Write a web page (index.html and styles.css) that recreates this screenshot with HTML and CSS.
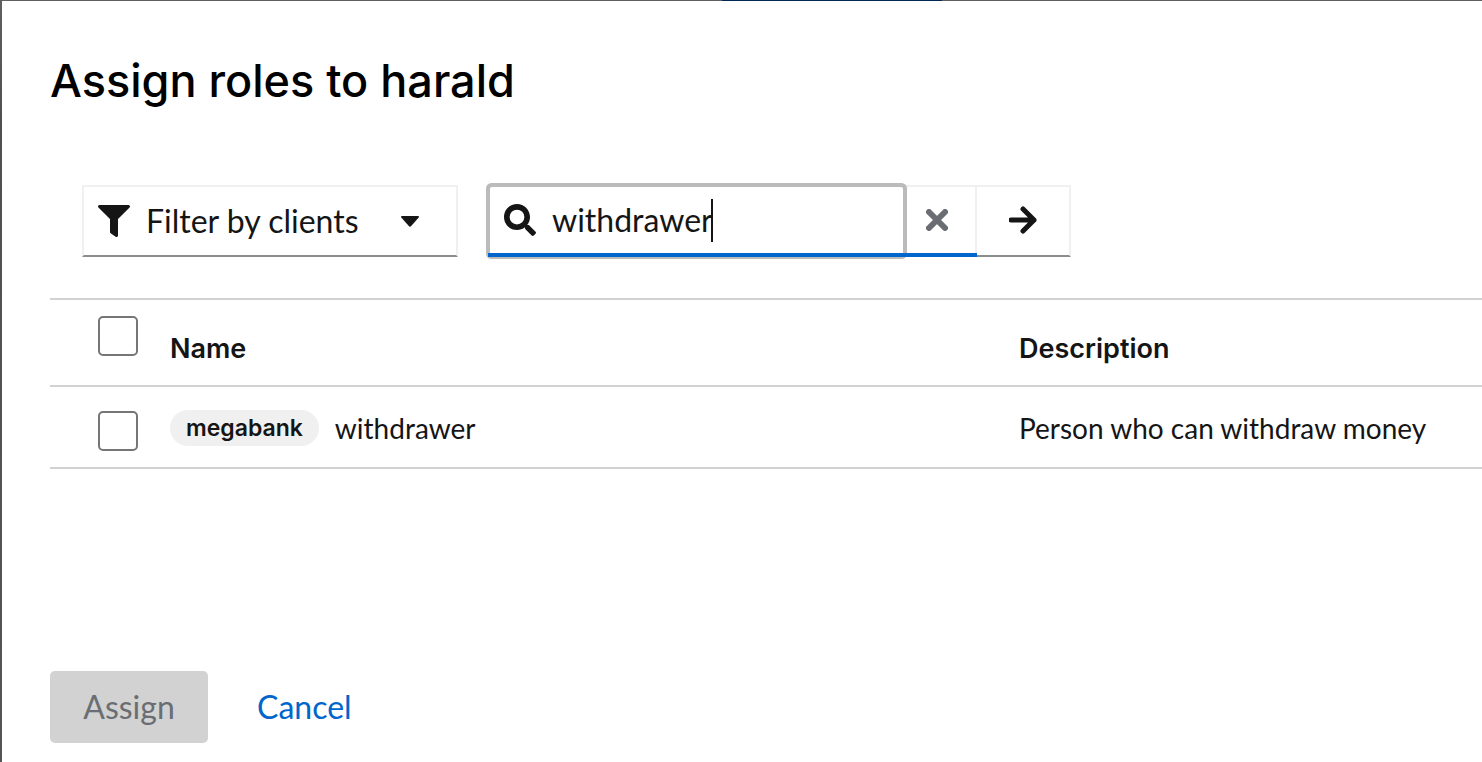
FILE: index.html
```html
<!DOCTYPE html>
<html lang="en">
<head>
<meta charset="utf-8">
<meta name="viewport" content="width=device-width, initial-scale=1">
<title>Assign roles to harald</title>
<link rel="stylesheet" href="styles.css">
</head>
<body>
<div class="backdrop">
  <span class="nav-strip"></span>
  <main class="modal" role="dialog" aria-labelledby="title">
    <h1 class="title" id="title">Assign roles to harald</h1>
    <div class="toolbar">
      <button class="filter" type="button" aria-haspopup="listbox">
        <svg class="icon" viewBox="0 0 512 512" aria-hidden="true"><path d="M487.976 0H24.028C2.71 0-8.047 25.866 7.058 40.971L192 225.941V432c0 7.831 3.821 15.17 10.237 19.662l80 55.98C298.02 518.69 320 507.493 320 487.98V225.941l184.947-184.97C520.021 25.896 509.338 0 487.976 0z"/></svg>
        <span class="filter-label">Filter by clients</span>
        <svg class="caret-down" viewBox="0 0 18 11" aria-hidden="true"><path d="M1 0h16q1.500 .2.700 1.600L10.200 10q-1.200 1.300-2.400 0L.3 1.600Q-.5.2 1 0z"/></svg>
      </button>
      <form class="search">
        <div class="field">
          <label class="entry">
            <svg class="icon" viewBox="0 0 512 512" aria-hidden="true"><path fill-rule="evenodd" d="M505 442.700L405.300 343c-4.500-4.500-10.600-7-17-7H372c27.600-35.300 44-79.700 44-128C416 93.100 322.900 0 208 0S0 93.100 0 208s93.100 208 208 208c48.300 0 92.700-16.400 128-44v16.300c0 6.400 2.500 12.500 7 17l99.700 99.700c9.400 9.400 24.600 9.400 33.900 0l28.300-28.300c9.400-9.400 9.400-24.600.1-34zM208 326a118 118 0 1 1 0-236 118 118 0 1 1 0 236z"/></svg>
            <span class="typed"><input class="query" type="text" value="withdrawer" aria-label="Search roles"><span class="cursor"></span></span>
          </label>
          <button class="clear" type="button" aria-label="Clear">
            <svg class="cross" viewBox="0 0 22 22" aria-hidden="true"><path d="M3 3l16 16M19 3L3 19"/></svg>
          </button>
        </div>
        <button class="submit" type="submit" aria-label="Search">
          <svg class="arrow" viewBox="0 0 28 28" aria-hidden="true"><path d="M2 14h23M14 3l11 11-11 11"/></svg>
        </button>
      </form>
    </div>
    <table class="roles">
      <thead>
        <tr>
          <th class="pick"><input class="check" type="checkbox" aria-label="Select all roles"></th>
          <th class="name" scope="col">Name</th>
          <th scope="col">Description</th>
        </tr>
      </thead>
      <tbody>
        <tr>
          <td class="pick"><input class="check" type="checkbox" aria-label="Select withdrawer"></td>
          <td class="name"><div class="role"><span class="badge">megabank</span><span>withdrawer</span></div></td>
          <td>Person who can withdraw money</td>
        </tr>
      </tbody>
    </table>
    <footer class="actions">
      <button class="assign" type="button" disabled>Assign</button>
      <button class="cancel" type="button">Cancel</button>
    </footer>
  </main>
</div>
</body>
</html>
```

FILE: styles.css
```css
* { box-sizing: border-box; }

body {
  margin: 0;
  color: #151515;
  background: #fff;
  font: 28px/36px Lato, "Open Sans", sans-serif;
}

button, input { font: inherit; color: inherit; }
button { cursor: pointer; }
svg { flex: none; fill: currentColor; }

.backdrop {
  position: relative;
  display: flex;
  min-height: 100vh;
  padding: 1px 0 0 2px;
  background: linear-gradient(#605e60, #505052 120px, #555557);
}

.nav-strip {
  position: absolute;
  top: 0;
  left: 722px;
  width: 220px;
  height: 1px;
  background: #00274f;
}

.modal {
  flex: 1;
  min-width: 0;
  display: flex;
  flex-direction: column;
  padding: 48px 0 19px 48px;
  background: #fff;
  overflow: hidden;
}

.title {
  margin: 0;
  color: #000;
  font: 500 45px/64px Inter, sans-serif;
}

.toolbar {
  display: flex;
  gap: 30px;
  padding: 72px 32px 41px;
  font-size: 32px;
}

.filter {
  display: flex;
  align-items: center;
  width: 376px;
  height: 72px;
  padding: 0 37px 0 14px;
  background: #fff;
  border: 2px solid #f0f0f0;
  border-bottom-color: #8a8d90;
}

.filter-label { flex: 1; margin-left: 16px; text-align: left; }
.icon { width: 32px; height: 32px; }
.caret-down { width: 18px; height: 11px; }

.search { display: flex; }

.field {
  position: relative;
  display: flex;
  width: 489px;
  height: 72px;
  border: 2px solid #f0f0f0;
  border-bottom: 0;
}

.field::after {
  content: "";
  position: absolute;
  inset: auto -2px 0;
  height: 4px;
  background: #06c;
}

.entry {
  display: flex;
  align-items: center;
  gap: 16px;
  width: 413px;
  margin-bottom: 2px;
  padding: 0 0 2px 14px;
  border-radius: 2px;
  box-shadow: 0 0 0 4px #bbb;
}

.typed { display: flex; align-items: center; }

.query {
  field-sizing: content;
  padding: 0;
  border: 0;
  outline: 0;
  background: none;
}

.cursor { width: 2px; height: 43px; margin-left: -2px; background: #151515; }

.clear {
  display: flex;
  align-items: center;
  flex: 1;
  padding: 0 0 4px 23px;
  border: 0;
  background: none;
  color: #6a6e73;
}

.cross { width: 22px; height: 22px; }
.cross path { fill: none; stroke: currentColor; stroke-width: 6; stroke-linecap: round; }

.submit {
  display: flex;
  align-items: center;
  justify-content: center;
  width: 94px;
  padding: 0 0 2px;
  background: #fff;
  border: 2px solid #f0f0f0;
  border-left: 0;
  border-bottom-color: #8a8d90;
}

.arrow { width: 28px; height: 28px; }
.arrow path { fill: none; stroke: currentColor; stroke-width: 5; stroke-linecap: round; stroke-linejoin: round; }

.roles {
  width: 100%;
  table-layout: fixed;
  border-spacing: 0;
  border-top: 2px solid #d2d2d2;
}

.roles th, .roles td {
  padding: 23px 0 21px;
  border-bottom: 2px solid #d2d2d2;
  text-align: left;
  vertical-align: top;
}

.roles th { padding: 31px 0 18px; font: 600 27px/36px Inter, sans-serif; }
.roles .pick { width: 120px; padding: 24px 0 0 48px; line-height: 0; }
.roles th.pick { padding-top: 16px; }
.roles .name { width: 849px; }

.check {
  appearance: none;
  width: 40px;
  height: 40px;
  margin: 0;
  border: 2px solid #767676;
  border-radius: 5px;
  background: #fff;
}

.role { display: flex; align-items: center; gap: 16px; }

.badge {
  padding: 0 16px;
  border-radius: 18px;
  background: #f0f0f0;
  font: 600 23px/36px Inter, sans-serif;
}

.actions {
  display: flex;
  gap: 17px;
  margin-top: auto;
  font-size: 32px;
}

.assign, .cancel { height: 72px; padding: 0 32px; border: 0; border-radius: 5px; }
.assign { min-width: 158px; background: #d2d2d2; color: #6a6e73; }
.cancel { background: none; color: #06c; }
```
